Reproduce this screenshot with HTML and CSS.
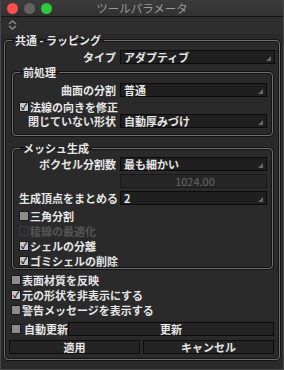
FILE: index.html
```html
<!DOCTYPE html>
<html lang="ja">
<head>
    <meta charset="UTF-8">
    <meta name="viewport" content="width=device-width, initial-scale=1.0">
    <title>ツールパラメータ</title>
    <link rel="stylesheet" href="styles.css">
</head>
<body>
    <div class="window">
        <div class="titlebar">
            <div class="lights">
                <span class="light red"></span>
                <span class="light gray"></span>
                <span class="light green"></span>
            </div>
            <div class="title">ツールパラメータ</div>
        </div>
        <div class="toolbar">
            <svg width="9" height="10" viewBox="0 0 9 10">
                <path d="M1 4 L4.5 1 L8 4" fill="none" stroke="#8a8a8a" stroke-width="1.4"/>
                <path d="M1 6 L4.5 9 L8 6" fill="none" stroke="#8a8a8a" stroke-width="1.4"/>
            </svg>
        </div>

        <fieldset class="group outer">
            <legend>共通 - ラッピング</legend>

            <div class="row">
                <label class="lbl">タイプ</label>
                <div class="select">アダプティブ</div>
            </div>

            <fieldset class="group inner">
                <legend>前処理</legend>
                <div class="row">
                    <label class="lbl">曲面の分割</label>
                    <div class="select">普通</div>
                </div>
                <div class="check on">法線の向きを修正</div>
                <div class="row">
                    <label class="lbl">閉じていない形状</label>
                    <div class="select">自動厚みづけ</div>
                </div>
            </fieldset>

            <fieldset class="group inner mesh">
                <legend>メッシュ生成</legend>
                <div class="row">
                    <label class="lbl">ボクセル分割数</label>
                    <div class="select">最も細かい</div>
                </div>
                <div class="row">
                    <span class="lbl"></span>
                    <div class="field">1024.00</div>
                </div>
                <div class="row">
                    <label class="lbl">生成頂点をまとめる</label>
                    <div class="select">2</div>
                </div>
                <div class="check">三角分割</div>
                <div class="check disabled">稜線の最適化</div>
                <div class="check on">シェルの分離</div>
                <div class="check on">ゴミシェルの削除</div>
            </fieldset>

            <div class="options">
                <div class="check">表面材質を反映</div>
                <div class="check on">元の形状を非表示にする</div>
                <div class="check">警告メッセージを表示する</div>
            </div>

            <div class="update-row">
                <div class="auto">
                    <span class="box"></span>
                    <span>自動更新</span>
                </div>
                <button class="btn">更新</button>
            </div>
            <div class="button-row">
                <button class="btn">適用</button>
                <button class="btn">キャンセル</button>
            </div>
        </fieldset>
    </div>
</body>
</html>
```

FILE: styles.css
```css
html, body {
    margin: 0;
    padding: 0;
    background: #2a2a2a;
}

body {
    font-family: "Noto Sans CJK JP", "Liberation Sans", sans-serif;
    font-size: 11px;
    color: #e6e6e6;
}

.window {
    width: 284px;
    height: 370px;
    box-sizing: border-box;
    border: 1px solid #474747;
    border-top: none;
    background: #2a2a2a;
    overflow: hidden;
}

.titlebar {
    height: 16px;
    display: flex;
    align-items: center;
    background: linear-gradient(#3b3b3b, #323232);
    border-bottom: 1px solid #151515;
    position: relative;
}

.lights {
    display: flex;
    gap: 6px;
    padding-left: 6px;
}

.light {
    width: 11px;
    height: 11px;
    border-radius: 50%;
}

.red { background: #fc4f4f; }
.gray { background: #626262; }
.green { background: #2cc840; }

.title {
    position: absolute;
    left: 0;
    right: 0;
    text-align: center;
    color: #9a9a9a;
    font-size: 11.5px;
    line-height: 16px;
}

.toolbar {
    height: 14px;
    padding: 3px 0 0 7px;
    background: #2e2e2e;
}

.toolbar svg {
    display: block;
}

/* group boxes */
.group {
    margin: 0;
    border: 1px solid #6e6e6e;
    border-radius: 4px;
    box-shadow: inset 0 0 0 1px #141414, 0 0 0 1px #141414;
    min-width: 0;
}

.group legend {
    font-weight: bold;
    font-size: 11px;
    line-height: 12px;
    height: 12px;
    padding: 0 3px;
    margin-left: 1px;
}

.outer {
    margin: 0 3px;
    padding: 4px 4px 5px 6px;
}

.inner {
    margin: 2px 2px 0 1px;
    padding: 5px 5px 5px 6px;
}

.mesh {
    margin-top: 6px;
    padding-top: 3px;
    padding-bottom: 0;
}

.row {
    display: flex;
    align-items: center;
    height: 14px;
    margin-bottom: 2px;
}

.mesh .row {
    margin-bottom: 3px;
}

.lbl {
    flex: none;
    width: 109px;
    box-sizing: border-box;
    text-align: right;
    padding-right: 4px;
    font-weight: bold;
    white-space: nowrap;
}

.inner .lbl {
    width: 101px;
}

.select, .field {
    flex: 1;
    height: 12px;
    line-height: 12px;
    border: 1px solid #0c0c0c;
    background: #1f1f1f;
    padding-left: 3px;
    position: relative;
    font-weight: bold;
    white-space: nowrap;
}

.select::after {
    content: "";
    position: absolute;
    right: 3px;
    bottom: 2px;
    border-left: 5px solid transparent;
    border-bottom: 5px solid #6a6a6a;
}

.field {
    background: #262626;
    border-color: #1a1a1a;
    color: #666;
    text-align: center;
    font-weight: normal;
}

/* checkboxes */
.check {
    display: flex;
    align-items: center;
    height: 15px;
    font-weight: bold;
    white-space: nowrap;
}

.check::before {
    content: "";
    flex: none;
    width: 8px;
    height: 8px;
    margin-right: 1px;
    border: 1px solid #1a1a1a;
    background: #8c8c8c;
}

.check.on::before {
    content: "✓";
    font-size: 9px;
    line-height: 8px;
    text-align: center;
    color: #111;
    background: #c8c8c8;
    font-weight: bold;
}

.check.disabled {
    color: #555;
}

.check.disabled::before {
    background: #2c2c2c;
    border-color: #3a3a3a;
}

.options {
    margin-top: 3px;
}

/* buttons */
.update-row {
    display: flex;
    margin: 5px 1px 4px -2px;
    height: 14px;
}

.auto {
    flex: none;
    width: 59px;
    display: flex;
    align-items: center;
    gap: 3px;
    padding-left: 2px;
    box-sizing: border-box;
    font-weight: bold;
    white-space: nowrap;
}

.box {
    flex: none;
    width: 8px;
    height: 8px;
    border: 1px solid #1a1a1a;
    background: #8c8c8c;
}

.button-row {
    display: grid;
    grid-template-columns: 1fr 1fr;
    gap: 3px;
    margin: 0 1px 0 -2px;
}

.btn {
    font: inherit;
    font-weight: bold;
    color: #e6e6e6;
    background: #242424;
    border: 1px solid #0c0c0c;
    height: 14px;
    padding: 0;
    line-height: 12px;
}

.update-row .btn {
    flex: 1;
    min-width: 0;
}
```
